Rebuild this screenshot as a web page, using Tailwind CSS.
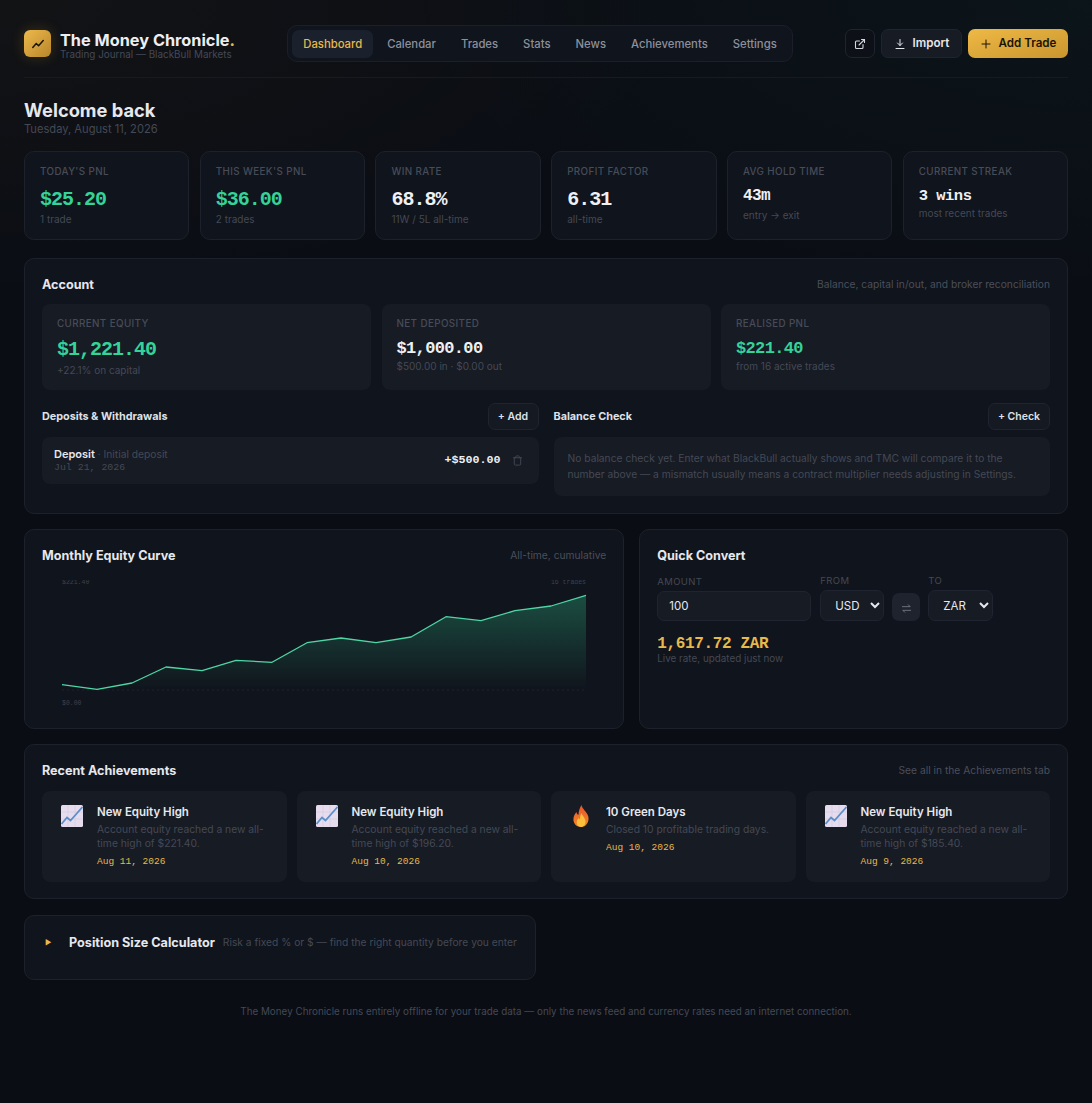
<!DOCTYPE html>
<html lang="en">
<head>
  <meta charset="UTF-8">
  <meta name="viewport" content="width=device-width, initial-scale=1.0">
  <title>The Money Chronicle</title>
  <script src="https://cdn.jsdelivr.net/npm/@tailwindcss/browser@4"></script>
</head>
<body class="min-h-[1103px] bg-[#0a0d14] bg-[radial-gradient(700px_300px_at_0%_0%,rgba(232,176,60,0.04),transparent),radial-gradient(700px_300px_at_100%_0%,rgba(52,211,153,0.04),transparent)] bg-no-repeat font-['Inter',sans-serif] text-[#e6e8ee]">
  <div class="px-6 pt-[25px]">

    <!-- Header -->
    <header class="flex h-[53px] items-start justify-between border-b border-[#161a22]">
      <div class="flex items-start gap-[9px] pt-[5px]">
        <div class="flex h-[27px] w-[27px] items-center justify-center rounded-[6px] bg-gradient-to-br from-[#eeba4c] to-[#b8862a] shadow-[0_0_14px_rgba(232,176,60,0.2)]">
          <svg class="h-[14px] w-[14px]" viewBox="0 0 24 24" fill="none" stroke="#1a1408" stroke-width="2.5" stroke-linecap="round" stroke-linejoin="round"><path d="M3 18l6-7 4 4 8-9"/></svg>
        </div>
        <div class="pt-[2px]">
          <div class="text-[16.3px] font-bold leading-[16px] text-[#eceef2]">The Money Chronicle<span class="text-[#e8b84a]">.</span></div>
          <div class="mt-[1px] text-[9.9px] leading-[11px] text-[#444955]">Trading Journal — BlackBull Markets</div>
        </div>
      </div>

      <nav class="flex h-[37px] items-center gap-[3px] rounded-[10px] border border-[#1a1f2a] bg-[#10141c] px-1 text-[11.3px] font-medium text-[#8b909c]">
        <a class="flex h-[28px] items-center rounded-[7px] bg-[#1a202c] px-[11px] pt-[1px] text-[#e8b84a]">Dashboard</a>
        <a class="px-[11px] pt-[1px]">Calendar</a>
        <a class="px-[11px] pt-[1px]">Trades</a>
        <a class="px-[11px] pt-[1px]">Stats</a>
        <a class="px-[11px] pt-[1px]">News</a>
        <a class="px-[11px] pt-[1px]">Achievements</a>
        <a class="px-[11px] pt-[1px]">Settings</a>
      </nav>

      <div class="flex items-center gap-[6px] pt-[4px]">
        <button class="flex h-[29px] w-[30px] items-center justify-center rounded-[7px] border border-[#1f2430] bg-[#0d1017] text-[#d5d8df]">
          <svg class="h-[12px] w-[12px]" viewBox="0 0 24 24" fill="none" stroke="currentColor" stroke-width="2.2" stroke-linecap="round" stroke-linejoin="round"><path d="M18 13v6a2 2 0 0 1-2 2H5a2 2 0 0 1-2-2V8a2 2 0 0 1 2-2h6"/><path d="M15 3h6v6"/><path d="M10 14L21 3"/></svg>
        </button>
        <button class="flex h-[29px] w-[81px] items-center justify-center gap-[7px] rounded-[7px] border border-[#1f2430] bg-[#171b24] pt-[1px] text-[11.6px] font-semibold text-[#e6e8ee]">
          <svg class="h-[12px] w-[12px]" viewBox="0 0 24 24" fill="none" stroke="currentColor" stroke-width="2" stroke-linecap="round" stroke-linejoin="round"><path d="M12 3v12"/><path d="M7 10l5 5 5-5"/><path d="M4 21h16"/></svg>
          Import
        </button>
        <button class="flex h-[29px] w-[100px] items-center justify-center gap-[7px] rounded-[7px] bg-gradient-to-br from-[#efb945] to-[#c9962f] pt-[1px] text-[11.6px] font-semibold text-[#1a1408]">
          <svg class="h-[12px] w-[12px]" viewBox="0 0 24 24" fill="none" stroke="currentColor" stroke-width="2" stroke-linecap="round"><path d="M12 4v16M4 12h16"/></svg>
          Add Trade
        </button>
      </div>
    </header>

    <!-- Welcome -->
    <h1 class="mt-[21px] text-[18.3px] font-bold leading-[22px] text-[#e6e8ee]">Welcome back</h1>
    <p class="mt-[1px] text-[11.15px] leading-[14px] text-[#444955]">Tuesday, August 11, 2026</p>

    <!-- KPI cards -->
    <div class="mt-[15px] grid h-[89px] grid-cols-6 gap-[10.4px]">
      <div class="rounded-[10px] border border-[#1c212b] bg-[#10141c] px-[15px] pt-[14px]">
        <div class="text-[9.8px] font-medium leading-[12px] tracking-[0.4px] text-[#474c58]">TODAY'S PNL</div>
        <div class="mt-[11px] font-['Liberation_Mono',monospace] text-[20px] font-bold leading-[22px] tracking-[-1px] text-[#34d399]">$25.20</div>
        <div class="mt-[1px] text-[10px] leading-[14px] text-[#444955]">1 trade</div>
      </div>
      <div class="rounded-[10px] border border-[#1c212b] bg-[#10141c] px-[15px] pt-[14px]">
        <div class="text-[9.8px] font-medium leading-[12px] tracking-[0.4px] text-[#474c58]">THIS WEEK'S PNL</div>
        <div class="mt-[11px] font-['Liberation_Mono',monospace] text-[20px] font-bold leading-[22px] tracking-[-1px] text-[#34d399]">$36.00</div>
        <div class="mt-[1px] text-[10px] leading-[14px] text-[#444955]">2 trades</div>
      </div>
      <div class="rounded-[10px] border border-[#1c212b] bg-[#10141c] px-[15px] pt-[14px]">
        <div class="text-[9.8px] font-medium leading-[12px] tracking-[0.4px] text-[#474c58]">WIN RATE</div>
        <div class="mt-[11px] font-['Liberation_Mono',monospace] text-[20px] font-bold leading-[22px] tracking-[-1px] text-[#eef0f4]">68.8%</div>
        <div class="mt-[1px] text-[10px] leading-[14px] text-[#444955]">11W / 5L all-time</div>
      </div>
      <div class="rounded-[10px] border border-[#1c212b] bg-[#10141c] px-[15px] pt-[14px]">
        <div class="text-[9.8px] font-medium leading-[12px] tracking-[0.4px] text-[#474c58]">PROFIT FACTOR</div>
        <div class="mt-[11px] font-['Liberation_Mono',monospace] text-[20px] font-bold leading-[22px] tracking-[-1px] text-[#eef0f4]">6.31</div>
        <div class="mt-[1px] text-[10px] leading-[14px] text-[#444955]">all-time</div>
      </div>
      <div class="rounded-[10px] border border-[#1c212b] bg-[#10141c] px-[15px] pt-[14px]">
        <div class="text-[9.8px] font-medium leading-[12px] tracking-[0.4px] text-[#474c58]">AVG HOLD TIME</div>
        <div class="mt-[9px] font-['Liberation_Mono',monospace] text-[16px] font-bold leading-[18px] tracking-[-0.6px] text-[#eef0f4]">43m</div>
        <div class="mt-[3px] text-[10px] leading-[14px] text-[#444955]">entry → exit</div>
      </div>
      <div class="rounded-[10px] border border-[#1c212b] bg-[#10141c] px-[15px] pt-[14px]">
        <div class="text-[9.8px] font-medium leading-[12px] tracking-[0.4px] text-[#474c58]">CURRENT STREAK</div>
        <div class="mt-[9px] font-['Liberation_Mono',monospace] text-[15.5px] font-bold leading-[18px] tracking-[-0.5px] text-[#eef0f4]">3 wins</div>
        <div class="mt-[1px] text-[10px] leading-[14px] text-[#444955]">most recent trades</div>
      </div>
    </div>

    <!-- Account -->
    <section class="mt-[18px] rounded-[10px] border border-[#1c212b] bg-[#10141c] px-[17px] pb-[17px] pt-[17px]">
      <div class="flex h-[18px] items-center justify-between">
        <h2 class="text-[12.6px] font-bold text-[#e6e8ee]">Account</h2>
        <span class="text-[10.25px] text-[#4a4f5b]">Balance, capital in/out, and broker reconciliation</span>
      </div>
      <div class="mt-[10px] grid h-[86px] grid-cols-3 gap-[10.5px]">
        <div class="rounded-[8px] bg-[#171b24] px-[15px] pt-[14px]">
          <div class="text-[9.8px] font-medium leading-[12px] tracking-[0.4px] text-[#474c58]">CURRENT EQUITY</div>
          <div class="mt-[9px] font-['Liberation_Mono',monospace] text-[20px] font-bold leading-[22px] tracking-[-1px] text-[#34d399]">$1,221.40</div>
          <div class="mt-[2px] text-[10px] leading-[14px] text-[#444955]">+22.1% on capital</div>
        </div>
        <div class="rounded-[8px] bg-[#171b24] px-[15px] pt-[14px]">
          <div class="text-[9.8px] font-medium leading-[12px] tracking-[0.4px] text-[#474c58]">NET DEPOSITED</div>
          <div class="mt-[9px] font-['Liberation_Mono',monospace] text-[17px] font-bold leading-[20px] tracking-[-0.65px] text-[#eef0f4]">$1,000.00</div>
          <div class="text-[10px] leading-[14px] text-[#444955]">$500.00 in · $0.00 out</div>
        </div>
        <div class="rounded-[8px] bg-[#171b24] px-[15px] pt-[14px]">
          <div class="text-[9.8px] font-medium leading-[12px] tracking-[0.4px] text-[#474c58]">REALISED PNL</div>
          <div class="mt-[9px] font-['Liberation_Mono',monospace] text-[17px] font-bold leading-[20px] tracking-[-0.65px] text-[#34d399]">$221.40</div>
          <div class="text-[10px] leading-[14px] text-[#444955]">from 16 active trades</div>
        </div>
      </div>

      <div class="mt-[13px] grid grid-cols-2 gap-[15px]">
        <div>
          <div class="flex h-[27px] items-center justify-between">
            <h3 class="pt-[2px] text-[10.8px] font-bold text-[#dfe1e7]">Deposits &amp; Withdrawals</h3>
            <button class="h-[27px] w-[51px] rounded-[7px] border border-[#1f2430] bg-[#151922] text-[10.5px] font-semibold text-[#dfe1e7]">+ Add</button>
          </div>
          <div class="mt-[7px] flex h-[47px] items-center justify-between rounded-[8px] bg-[#171b24] pl-3 pr-[16px]">
            <div>
              <div class="text-[11px] leading-[14px]"><span class="font-semibold text-[#e6e8ee]">Deposit</span><span class="text-[10.25px] text-[#444955]"> · Initial deposit</span></div>
              <div class="font-['Liberation_Mono',monospace] text-[9.9px] leading-[13px] text-[#444955]">Jul 21, 2026</div>
            </div>
            <div class="flex items-center gap-[11px]">
              <span class="font-['Liberation_Mono',monospace] text-[11.7px] font-bold text-[#eef0f4]">+$500.00</span>
              <svg class="h-[11px] w-[11px] text-[#444955]" viewBox="0 0 24 24" fill="none" stroke="currentColor" stroke-width="2" stroke-linecap="round" stroke-linejoin="round"><path d="M3 6h18"/><path d="M19 6v14a2 2 0 0 1-2 2H7a2 2 0 0 1-2-2V6"/><path d="M8 6V4a2 2 0 0 1 2-2h4a2 2 0 0 1 2 2v2"/></svg>
            </div>
          </div>
        </div>
        <div>
          <div class="flex h-[27px] items-center justify-between">
            <h3 class="pt-[2px] text-[10.8px] font-bold text-[#dfe1e7]">Balance Check</h3>
            <button class="h-[27px] w-[62px] rounded-[7px] border border-[#1f2430] bg-[#151922] text-[10.5px] font-semibold text-[#dfe1e7]">+ Check</button>
          </div>
          <div class="mt-[7px] h-[59px] rounded-[8px] bg-[#171b24] px-[14px] pt-[13px] text-[10.25px] leading-[16px] text-[#444955]">No balance check yet. Enter what BlackBull actually shows and TMC will compare it to the number above — a mismatch usually means a contract multiplier needs adjusting in Settings.</div>
        </div>
      </div>
    </section>

    <!-- Chart + converter -->
    <div class="mt-[15px] grid h-[200px] grid-cols-[1.4fr_1fr] gap-[15px]">
      <section class="rounded-[10px] border border-[#1c212b] bg-[#10141c] px-[17px] pt-[17px]">
        <div class="flex h-[18px] items-center justify-between">
          <h2 class="text-[12.6px] font-bold text-[#e6e8ee]">Monthly Equity Curve</h2>
          <span class="text-[10.25px] text-[#4a4f5b]">All-time, cumulative</span>
        </div>
        <svg class="mt-[15px] block" width="564" height="134" viewBox="42 580 564 134">
          <defs>
            <linearGradient id="fill" x1="0" y1="0" x2="0" y2="1">
              <stop offset="0%" stop-color="#34d399" stop-opacity="0.3"/>
              <stop offset="100%" stop-color="#34d399" stop-opacity="0"/>
            </linearGradient>
          </defs>
          <text x="62" y="584" font-size="6.5" font-family="Liberation Mono" fill="#3d424d">$221.40</text>
          <text x="586" y="584" font-size="6.5" font-family="Liberation Mono" fill="#3d424d" text-anchor="end">16 trades</text>
          <text x="62" y="705" font-size="6.5" font-family="Liberation Mono" fill="#3d424d">$0.00</text>
          <line x1="62" y1="690" x2="586" y2="690" stroke="#1e232d" stroke-width="1" stroke-dasharray="2 3"/>
          <path fill="url(#fill)" d="M62 690V684.700L97 689.300 132 683 166 667 202 670.700 236 660.300 272 662.300 307 642.700 341 638 376 642.700 411 637 446 616.700 481 620.700 515 610.700 551 606 586 595.300V690Z"/>
          <path fill="none" stroke="#4fd6a5" stroke-width="1.300" stroke-linejoin="round" d="M62 684.700L97 689.300 132 683 166 667 202 670.700 236 660.300 272 662.300 307 642.700 341 638 376 642.700 411 637 446 616.700 481 620.700 515 610.700 551 606 586 595.300"/>
        </svg>
      </section>

      <section class="rounded-[10px] border border-[#1c212b] bg-[#10141c] px-[17px] pt-[17px]">
        <h2 class="flex h-[18px] items-center text-[12.6px] font-bold text-[#e6e8ee]">Quick Convert</h2>
        <div class="mt-[10px] flex items-end">
          <label class="block w-[154px]">
            <span class="block text-[9.5px] leading-[12px] tracking-[0.4px] text-[#444955]">AMOUNT</span>
            <input value="100" class="mt-[3px] h-[30px] w-full rounded-[7px] border border-[#1f2430] bg-[#171b24] px-[11px] text-[11.5px] text-[#e6e8ee]">
          </label>
          <label class="ml-[9px] block w-[64px]">
            <span class="block text-[9.5px] leading-[12px] tracking-[0.4px] text-[#444955]">FROM</span>
            <select class="mt-[3px] h-[31px] w-full rounded-[7px] border border-[#1f2430] bg-[#171b24] pl-[10px] pr-[7px] text-[11.5px] text-[#e6e8ee]"><option>USD</option></select>
          </label>
          <button class="ml-[8px] flex h-[28px] w-[28px] items-center justify-center rounded-[7px] bg-[#1e232e] pt-[3px] text-[#7c818d]">
            <svg class="h-[11px] w-[11px]" viewBox="0 0 24 24" fill="none" stroke="currentColor" stroke-width="1.8" stroke-linecap="round" stroke-linejoin="round"><path d="M3 8h17l-4-4"/><path d="M21 16H4l4 4"/></svg>
          </button>
          <label class="ml-[8px] block w-[65px]">
            <span class="block text-[9.5px] leading-[12px] tracking-[0.4px] text-[#444955]">TO</span>
            <select class="mt-[3px] h-[31px] w-full rounded-[7px] border border-[#1f2430] bg-[#171b24] pl-[10px] pr-[7px] text-[11.5px] text-[#e6e8ee]"><option>ZAR</option></select>
          </label>
        </div>
        <div class="mt-[13px] font-['Liberation_Mono',monospace] text-[16px] font-bold leading-[20px] tracking-[-0.35px] text-[#e8b84a]">1,617.72 ZAR</div>
        <div class="mt-[-2px] text-[9.9px] leading-[12px] text-[#444955]">Live rate, updated just now</div>
      </section>
    </div>

    <!-- Achievements -->
    <section class="mt-[15px] h-[155px] rounded-[10px] border border-[#1c212b] bg-[#10141c] px-[17px] pt-[17px]">
      <div class="flex h-[18px] items-center justify-between">
        <h2 class="text-[12.6px] font-bold text-[#e6e8ee]">Recent Achievements</h2>
        <span class="text-[10.25px] text-[#4a4f5b]">See all in the Achievements tab</span>
      </div>
      <div class="mt-[11px] grid h-[91px] grid-cols-4 gap-[10px]">
        <div class="flex gap-[13px] rounded-[8px] bg-[#171b24] pl-[18px] pr-[14px] pt-[13px]">
          <svg class="h-6 w-6 shrink-0" viewBox="0 0 24 24"><rect x="1" y="1" width="22" height="22" rx="1.5" fill="#e6dcee"/><path d="M1 8h22M1 15h22M8 1v22M15 1v22" stroke="#cfc4de" stroke-width="0.5"/><path d="M1.5 20L7 13.500l3.500 3L22.500 3" fill="none" stroke="#5b8fc9" stroke-width="1.800"/></svg>
          <div>
            <div class="text-[11.5px] font-semibold leading-[16px] text-[#e6e8ee]">New Equity High</div>
            <div class="mt-[2px] text-[10.3px] leading-[14px] text-[#444955]">Account equity reached a new all-time high of $221.40.</div>
            <div class="mt-[4px] font-['Liberation_Mono',monospace] text-[9.5px] leading-[16px] text-[#e8b84a]">Aug 11, 2026</div>
          </div>
        </div>
        <div class="flex gap-[13px] rounded-[8px] bg-[#171b24] pl-[18px] pr-[14px] pt-[13px]">
          <svg class="h-6 w-6 shrink-0" viewBox="0 0 24 24"><rect x="1" y="1" width="22" height="22" rx="1.5" fill="#e6dcee"/><path d="M1 8h22M1 15h22M8 1v22M15 1v22" stroke="#cfc4de" stroke-width="0.5"/><path d="M1.5 20L7 13.500l3.500 3L22.500 3" fill="none" stroke="#5b8fc9" stroke-width="1.800"/></svg>
          <div>
            <div class="text-[11.5px] font-semibold leading-[16px] text-[#e6e8ee]">New Equity High</div>
            <div class="mt-[2px] text-[10.3px] leading-[14px] text-[#444955]">Account equity reached a new all-time high of $196.20.</div>
            <div class="mt-[4px] font-['Liberation_Mono',monospace] text-[9.5px] leading-[16px] text-[#e8b84a]">Aug 10, 2026</div>
          </div>
        </div>
        <div class="flex gap-[13px] rounded-[8px] bg-[#171b24] pl-[18px] pr-[14px] pt-[13px]">
          <svg class="h-6 w-6 shrink-0" viewBox="0 0 24 24"><defs><linearGradient id="flame" x1="0" y1="0" x2="0" y2="1"><stop offset="0%" stop-color="#e8552d"/><stop offset="100%" stop-color="#f08a24"/></linearGradient></defs><path fill="url(#flame)" d="M12.500 1c.5 4 5.500 6.500 6.800 11.500C20.500 18 17 23 12 23S3.600 18.800 4.600 13.500c.5-2.700 2-4.200 2.800-5.500.4 1.500 1 2.500 2 3C9.800 7.500 10.500 3.500 12.500 1z"/><path fill="#fbbf3c" d="M12.500 9c.5 2.500 4 5 4 8.500 0 3-2 5.500-4.500 5.500s-4.500-2.300-4.200-5.200c.2-1.800 1.200-3 1.900-3.800.4.800.8 1.300 1.300 1.500 0-2.500.5-4.500 1.500-6.500z"/></svg>
          <div>
            <div class="text-[11.5px] font-semibold leading-[16px] text-[#e6e8ee]">10 Green Days</div>
            <div class="mt-[2px] text-[10.3px] leading-[14px] text-[#444955]">Closed 10 profitable trading days.</div>
            <div class="mt-[4px] font-['Liberation_Mono',monospace] text-[9.5px] leading-[16px] text-[#e8b84a]">Aug 10, 2026</div>
          </div>
        </div>
        <div class="flex gap-[13px] rounded-[8px] bg-[#171b24] pl-[18px] pr-[14px] pt-[13px]">
          <svg class="h-6 w-6 shrink-0" viewBox="0 0 24 24"><rect x="1" y="1" width="22" height="22" rx="1.5" fill="#e6dcee"/><path d="M1 8h22M1 15h22M8 1v22M15 1v22" stroke="#cfc4de" stroke-width="0.5"/><path d="M1.5 20L7 13.500l3.500 3L22.500 3" fill="none" stroke="#5b8fc9" stroke-width="1.800"/></svg>
          <div>
            <div class="text-[11.5px] font-semibold leading-[16px] text-[#e6e8ee]">New Equity High</div>
            <div class="mt-[2px] text-[10.3px] leading-[14px] text-[#444955]">Account equity reached a new all-time high of $185.40.</div>
            <div class="mt-[4px] font-['Liberation_Mono',monospace] text-[9.5px] leading-[16px] text-[#e8b84a]">Aug 9, 2026</div>
          </div>
        </div>
      </div>
    </section>

    <!-- Position size calculator (collapsed) -->
    <section class="mt-[16px] flex h-[65px] w-[512px] items-start rounded-[10px] border border-[#1c212b] bg-[#10141c] pl-[20px] pt-[18px]">
      <span class="flex h-[18px] w-[24px] items-center text-[7px] text-[#e8b84a]">▶</span>
      <span class="flex h-[18px] items-center text-[12.65px] font-bold text-[#e6e8ee]">Position Size Calculator</span>
      <span class="ml-[8px] flex h-[18px] items-center text-[10.25px] text-[#444955]">Risk a fixed % or $ — find the right quantity before you enter</span>
    </section>

    <footer class="mt-[24px] text-center text-[9.85px] leading-[14px] text-[#444955]">The Money Chronicle runs entirely offline for your trade data — only the news feed and currency rates need an internet connection.</footer>
  </div>
</body>
</html>
